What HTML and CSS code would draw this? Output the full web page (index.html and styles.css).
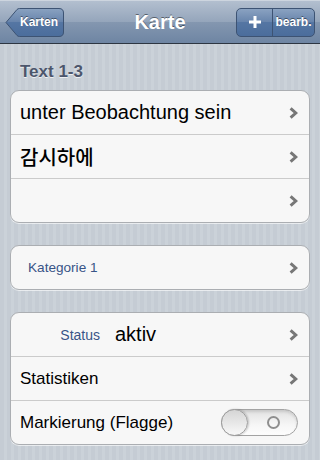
FILE: index.html
```html
<!DOCTYPE html>
<html>
<head>
<meta charset="utf-8">
<link rel="stylesheet" href="styles.css">
</head>
<body>
<div class="navbar">
  <div class="back-btn">
    <svg class="back-shape" width="59" height="29" viewBox="0 0 59 29">
      <defs>
        <linearGradient id="bg1" x1="0" y1="0" x2="0" y2="1">
          <stop offset="0" stop-color="#8aa2c1"/>
          <stop offset="0.5" stop-color="#6683ab"/>
          <stop offset="0.5" stop-color="#5576a3"/>
          <stop offset="1" stop-color="#4b6d9c"/>
        </linearGradient>
      </defs>
      <path d="M1 14.5 L12 1.5 Q13 0.5 14.5 0.5 L54 0.5 Q58.5 0.5 58.5 5 L58.5 24 Q58.5 28.5 54 28.5 L14.5 28.5 Q13 28.5 12 27.5 Z" fill="url(#bg1)" stroke="#3d5373" stroke-width="1"/>
    </svg>
    <span class="back-label">Karten</span>
  </div>
  <div class="title">Karte</div>
  <div class="seg">
    <div class="seg-item seg-plus">
      <svg width="14" height="14" viewBox="0 0 14 14"><path d="M7 1 V13 M1 7 H13" stroke="#fff" stroke-width="3"/></svg>
    </div>
    <div class="seg-item seg-text">bearb.</div>
  </div>
</div>

<div class="content">
  <div class="section-header">Text 1-3</div>
  <div class="group">
    <div class="row"><span class="cell-text big">unter Beobachtung sein</span><span class="chev"><svg width="9" height="12" viewBox="0 0 9 12"><path d="M1.6 1.4 L6.8 6 L1.6 10.6" fill="none" stroke="#777" stroke-width="3"/></svg></span></div>
    <div class="row"><span class="cell-text kr">감시하에</span><span class="chev"><svg width="9" height="12" viewBox="0 0 9 12"><path d="M1.6 1.4 L6.8 6 L1.6 10.6" fill="none" stroke="#777" stroke-width="3"/></svg></span></div>
    <div class="row"><span class="cell-text"></span><span class="chev"><svg width="9" height="12" viewBox="0 0 9 12"><path d="M1.6 1.4 L6.8 6 L1.6 10.6" fill="none" stroke="#777" stroke-width="3"/></svg></span></div>
  </div>

  <div class="group gap">
    <div class="row"><span class="cell-small">Kategorie 1</span><span class="chev"><svg width="9" height="12" viewBox="0 0 9 12"><path d="M1.6 1.4 L6.8 6 L1.6 10.6" fill="none" stroke="#777" stroke-width="3"/></svg></span></div>
  </div>

  <div class="group gap">
    <div class="row"><span class="label">Status</span><span class="value">aktiv</span><span class="chev"><svg width="9" height="12" viewBox="0 0 9 12"><path d="M1.6 1.4 L6.8 6 L1.6 10.6" fill="none" stroke="#777" stroke-width="3"/></svg></span></div>
    <div class="row"><span class="cell-text">Statistiken</span><span class="chev"><svg width="9" height="12" viewBox="0 0 9 12"><path d="M1.6 1.4 L6.8 6 L1.6 10.6" fill="none" stroke="#777" stroke-width="3"/></svg></span></div>
    <div class="row"><span class="cell-text">Markierung (Flagge)</span>
      <div class="switch"><div class="knob"></div><div class="off-ring"></div></div>
    </div>
  </div>
</div>
</body>
</html>
```

FILE: styles.css
```css
* { box-sizing: border-box; }
html, body { margin: 0; padding: 0; }
body {
  width: 320px;
  height: 460px;
  overflow: hidden;
  font-family: "Liberation Sans", Arial, sans-serif;
  background: repeating-linear-gradient(90deg, #c5ccd4 0 4px, #cbd2d9 4px 7px);
}
.navbar {
  height: 44px;
  display: flex;
  align-items: center;
  justify-content: space-between;
  padding: 0 5px 1px 5px;
  background: linear-gradient(#b3bfcf 0%, #94a5bb 50%, #8497b0 50%, #6e85a3 100%);
  border-bottom: 1px solid #2d3642;
  border-top: 1px solid #cdd5df;
  position: relative;
}
.back-btn {
  position: relative;
  width: 59px;
  height: 29px;
  margin-top: 1px;
}
.back-shape { display: block; }
.back-label {
  position: absolute;
  left: 12px;
  top: 0;
  width: 44px;
  height: 29px;
  display: flex;
  align-items: center;
  justify-content: center;
  color: #fff;
  font-weight: bold;
  font-size: 12px;
  text-shadow: 0 -1px 0 rgba(0,0,0,0.45);
}
.title {
  position: absolute;
  left: 0;
  right: 0;
  top: 0;
  height: 43px;
  display: flex;
  align-items: center;
  justify-content: center;
  color: #fff;
  font-weight: bold;
  font-size: 20px;
  text-shadow: 0 -1px 0 rgba(0,0,0,0.45);
  pointer-events: none;
}
.seg {
  display: flex;
  height: 29px;
  width: 79px;
  margin-top: 1px;
  border: 1px solid #3d5373;
  border-radius: 5px;
  overflow: hidden;
  background: linear-gradient(#8aa2c1 0%, #6683ab 50%, #5576a3 50%, #4b6d9c 100%);
  position: relative;
  z-index: 1;
}
.seg-item {
  display: flex;
  align-items: center;
  justify-content: center;
  height: 100%;
}
.seg-plus {
  width: 36px;
  border-right: 1px solid #3d5373;
}
.seg-text {
  flex: 1;
  color: #fff;
  font-weight: bold;
  font-size: 12px;
  text-shadow: 0 -1px 0 rgba(0,0,0,0.45);
}
.content {
  padding: 0 10px;
}
.section-header {
  padding: 18px 0 0 10px;
  height: 46px;
  color: #4c566c;
  font-weight: bold;
  font-size: 17px;
  line-height: 20px;
  text-shadow: 0 1px 0 rgba(255,255,255,0.7);
}
.group {
  background: #f7f7f7;
  border: 1px solid #abaeb2;
  border-radius: 9px;
  box-shadow: 0 1px 0 rgba(255,255,255,0.6);
}
.group.gap { margin-top: 22px; }
.row {
  height: 44px;
  display: flex;
  align-items: center;
  padding: 0 11px 0 9px;
  border-bottom: 1px solid #cbcbcb;
}
.row:last-child { border-bottom: none; height: 43px; }
.cell-text {
  flex: 1;
  font-size: 17px;
  color: #000;
}
.cell-text.big {
  font-size: 20px;
}
.kr {
  font-family: "Noto Sans CJK KR", "Liberation Sans", sans-serif;
  font-size: 20px;
  font-weight: 500;
}
.cell-small {
  flex: 1;
  padding-left: 8px;
  font-size: 13.6px;
  color: #385487;
}
.label {
  width: 80px;
  text-align: right;
  font-size: 14px;
  color: #385487;
}
.value {
  flex: 1;
  padding-left: 15px;
  font-size: 20px;
  color: #000;
}
.chev {
  width: 9px;
  height: 12px;
  display: flex;
}
.switch {
  position: relative;
  width: 77px;
  height: 27px;
  margin-left: 6px;
  border: 1px solid #a3a3a3;
  border-radius: 14px;
  background: linear-gradient(#e2e2e2, #f6f6f6 60%, #fdfdfd);
  box-shadow: inset 0 2px 3px rgba(0,0,0,0.12);
}
.knob {
  position: absolute;
  left: -1px;
  top: -1px;
  width: 27px;
  height: 27px;
  border-radius: 50%;
  border: 1px solid #9d9d9d;
  background: linear-gradient(#d5d5d5, #f5f5f5 90%);
  box-shadow: 1px 0 2px rgba(0,0,0,0.2);
}
.off-ring {
  position: absolute;
  left: 45px;
  top: 6px;
  width: 13px;
  height: 13px;
  border-radius: 50%;
  border: 2px solid #8e8e8e;
}
```
